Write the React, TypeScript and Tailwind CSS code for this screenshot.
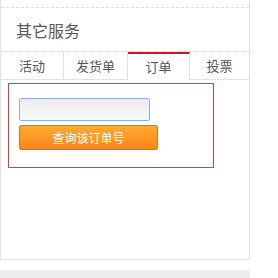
import React from 'react'

const tabs = [
  { name: '活动', w: 'w-[63px]' },
  { name: '发货单', w: 'w-[64px]' },
  { name: '订单', w: 'w-[62px]', active: true },
  { name: '投票', w: 'flex-1' },
]

export default function App() {
  return (
    <div
      className="w-[278px] h-[278px] bg-white overflow-hidden"
      style={{ fontFamily: '"Microsoft YaHei", "Noto Sans CJK SC", sans-serif' }}
    >
      <div className="w-[250px] h-[260px] border-x border-b border-[#e2e2e2] flex flex-col">
        <div className="h-[8px] border-b border-dashed border-[#dcdcdc]" />
        <div className="h-[43px] flex items-center pl-[15px] text-[16px] text-[#555]">其它服务</div>
        <div className="border-t border-dotted border-[#d8d8d8] flex h-[29px]">
          {tabs.map((t) => (
            <div
              key={t.name}
              className={`${t.w} flex items-center justify-center text-[13px] text-[#555] ${
                t.active
                  ? 'border-t-2 border-t-[#c81623] border-r border-r-[#e2e2e2]'
                  : 'border-b border-r border-[#e2e2e2] last:border-r-0 pt-[1px]'
              }`}
            >
              {t.name}
            </div>
          ))}
        </div>
        <div className="ml-[7px] mt-[3px] w-[206px] h-[85px] border border-[#e53a3a] pl-[10px] pt-[14px]">
          <input
            type="text"
            className="block w-[131px] h-[23px] border border-[#8eaee8] rounded-[2px] bg-gradient-to-b from-[#ececec] to-[#fafafa] outline-none"
          />
          <button className="mt-[4px] w-[139px] h-[25px] rounded-[2px] border border-[#e0741c] bg-gradient-to-b from-[#ffab2e] to-[#f7851b] text-white text-[12px] flex items-center justify-center">
            查询该订单号
          </button>
        </div>
      </div>
      <div className="mt-[10px] w-[250px] h-[8px] bg-[#eeeeee]" />
    </div>
  )
}
